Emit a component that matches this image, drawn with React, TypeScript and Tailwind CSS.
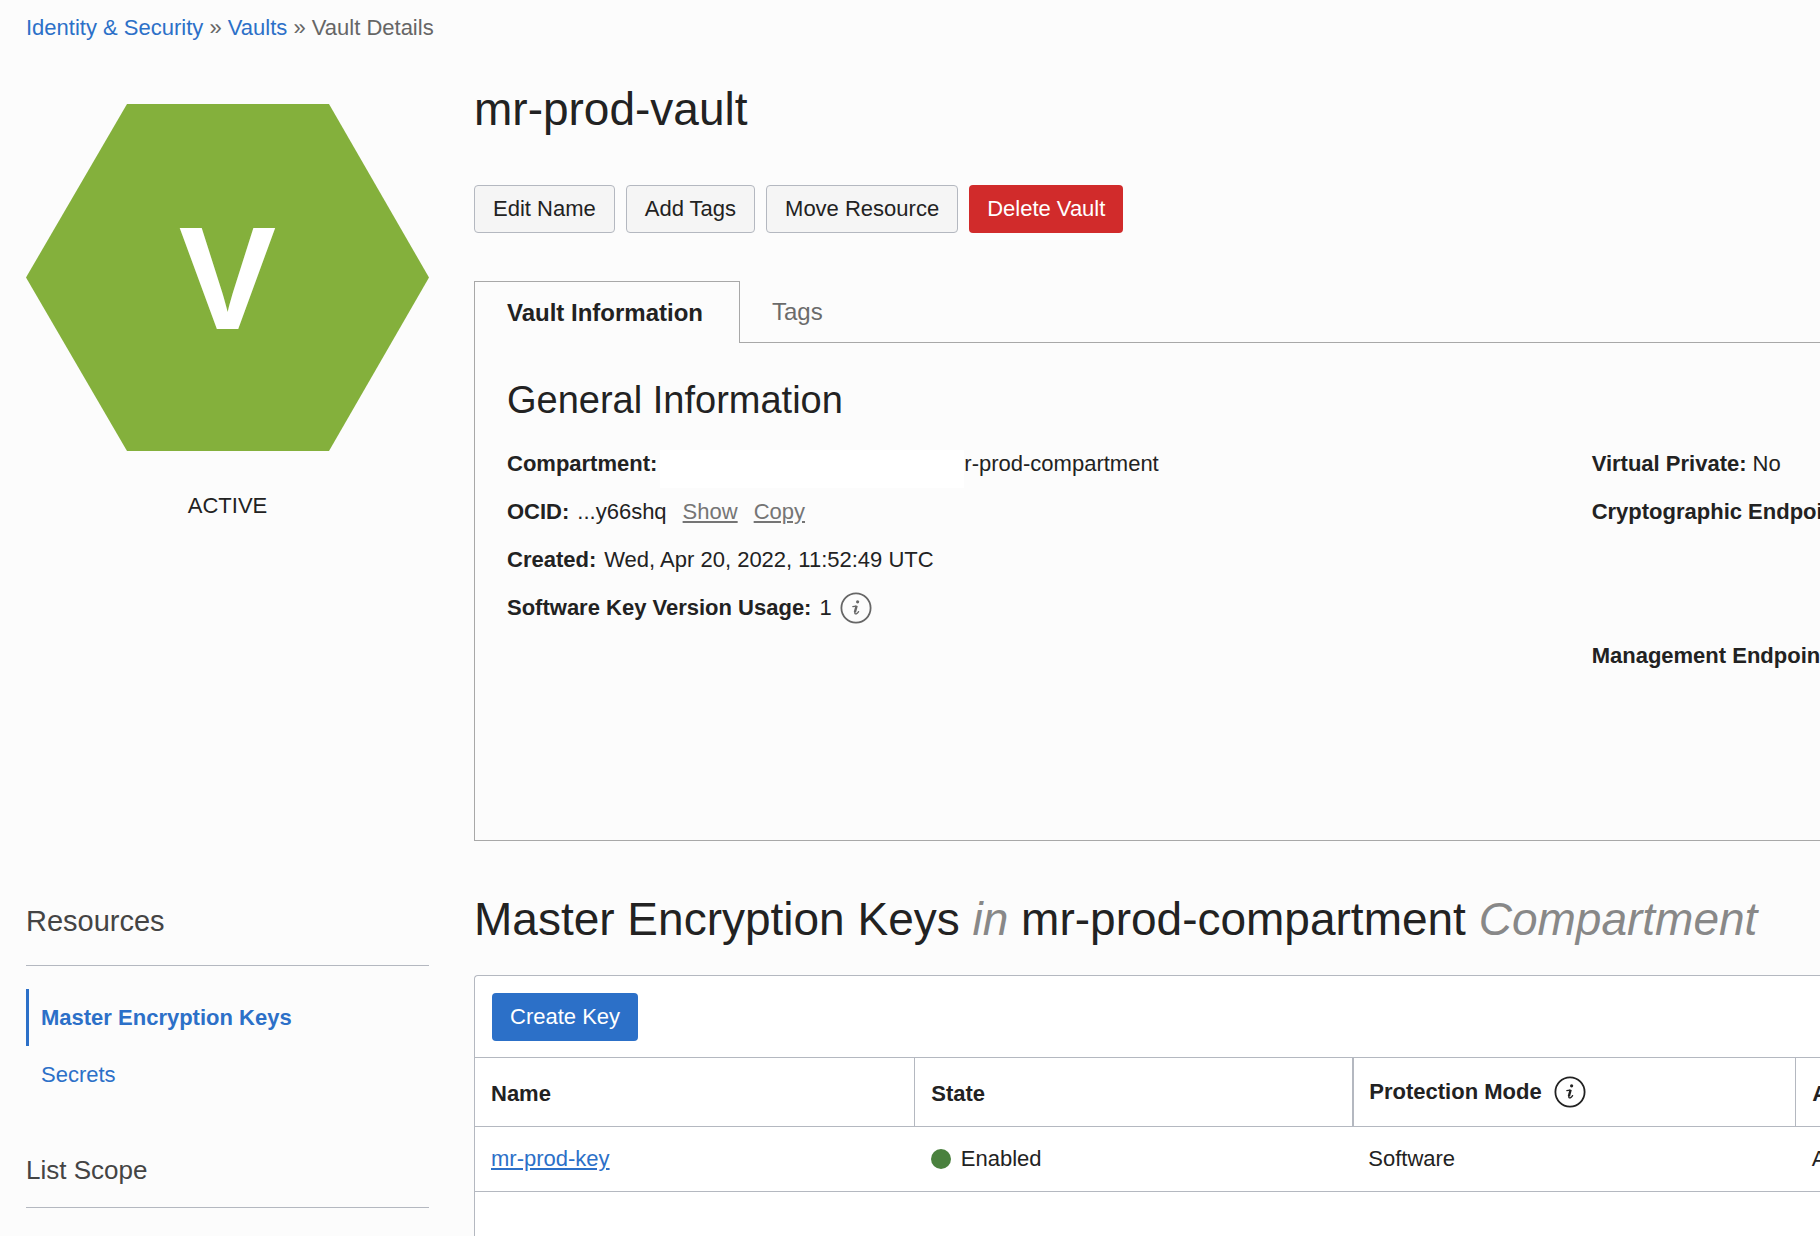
import React from "react";

function InfoIcon({ className }: { className: string }) {
  return (
    <svg viewBox="0 0 32 32" className={className} fill="none" stroke="currentColor" aria-hidden="true">
      <circle cx="16" cy="16" r="14.6" strokeWidth="1.8" />
      <circle cx="17.6" cy="9.8" r="1.6" fill="currentColor" stroke="none" />
      <path d="M12.8 14.7 L16 14.1" strokeWidth="1.2" strokeLinecap="round" />
      <path d="M16.6 13.8 L14.9 20.3" strokeWidth="2.4" />
      <path d="M14.8 20 Q14.5 22.4 16.3 21.8 Q17.6 21.2 18.6 19.6" strokeWidth="1.3" strokeLinecap="round" />
    </svg>
  );
}

function InfoButton({ label, className }: { label: string; className: string }) {
  return (
    <button type="button" aria-label={label} className="shrink-0">
      <InfoIcon className={className} />
    </button>
  );
}

function Field({ label, children }: { label: string; children?: React.ReactNode }) {
  return (
    <div className="flex h-12 items-center whitespace-nowrap">
      <dt className="font-bold">{label}</dt>
      <dd className="flex items-center self-stretch">{children}</dd>
    </div>
  );
}

const actions = ["Edit Name", "Add Tags", "Move Resource"];

export default function App() {
  return (
    <div className="flex min-h-screen flex-col overflow-x-hidden bg-[#fcfcfc] pl-[26px] font-['Liberation_Sans',Arial,sans-serif] text-[22px] leading-7 text-[#222]">
      <nav aria-label="Breadcrumb" className="pt-3.5 text-[#666]">
        <a href="#identity" className="text-[#2c70c8]">Identity &amp; Security</a>
        {" » "}
        <a href="#vaults" className="text-[#2c70c8]">Vaults</a>
        {" » "}
        <span>Vault Details</span>
      </nav>

      <section className="flex gap-[45px] pt-[39px]">
        <div className="flex w-[403px] shrink-0 flex-col items-center pt-[23px]">
          <svg viewBox="0 0 403 347" className="w-full" role="img" aria-label="Vault">
            <polygon points="101,0 303,0 403,173.5 303,347 101,347 0,173.5" fill="#84b03c" />
            <text x="201.5" y="225" textAnchor="middle" fontSize="146" fontWeight="700" fill="#fff">V</text>
          </svg>
          <p className="pt-[41px]">ACTIVE</p>
        </div>

        <div className="min-w-0 flex-1">
          <h1 className="text-[46px] leading-[56px]">mr-prod-vault</h1>
          <div className="flex gap-[11px] pt-12">
            {actions.map((a) => (
              <button key={a} type="button" className="h-12 rounded border border-[#b4b8c0] bg-[#f5f5f5] px-[18px]">
                {a}
              </button>
            ))}
            <button type="button" className="h-12 rounded bg-[#d12b2b] px-[18px] text-white">Delete Vault</button>
          </div>

          <div role="tablist" className="flex pt-12">
            <button type="button" role="tab" aria-selected="true" className="h-[62px] border border-b-0 border-[#a8a8a8] pr-9 pl-8 text-2xl font-bold">
              Vault Information
            </button>
            <div className="flex flex-1 border-b border-[#a8a8a8]">
              <button type="button" role="tab" aria-selected="false" className="px-8 text-2xl text-[#6b6b6b]">
                Tags
              </button>
            </div>
          </div>

          <div role="tabpanel" className="min-h-[498px] border-b border-l border-[#a8a8a8] pt-[33px] pl-8">
            <h2 className="text-[38px] leading-[48px]">General Information</h2>
            <div className="grid grid-cols-[minmax(0,19fr)_minmax(0,4fr)] pt-4">
              <dl>
                <Field label="Compartment:">
                  <span className="ml-[3px] h-[38px] w-[304px] self-end bg-white" />
                  r-prod-compartment
                </Field>
                <Field label="OCID:">
                  <span className="pl-2">...y66shq</span>
                  <button type="button" className="pl-4 text-[#757575] underline underline-offset-2">Show</button>
                  <button type="button" className="pl-4 text-[#757575] underline underline-offset-2">Copy</button>
                </Field>
                <Field label="Created:">
                  <span className="pl-2">Wed, Apr 20, 2022, 11:52:49 UTC</span>
                </Field>
                <Field label="Software Key Version Usage:">
                  <span className="px-2">1</span>
                  <InfoButton label="About software key version usage" className="size-8 text-[#666]" />
                </Field>
              </dl>
              <dl>
                <Field label="Virtual Private:">
                  <span className="pl-1.5">No</span>
                </Field>
                <Field label="Cryptographic Endpoint:" />
                <div className="pt-24">
                  <Field label="Management Endpoint:" />
                </div>
              </dl>
            </div>
          </div>
        </div>
      </section>

      <section className="flex flex-1 gap-[45px] pt-[50px]">
        <aside className="w-[403px] shrink-0">
          <h2 className="border-b border-[#b4b8c0] pt-3.5 pb-7 text-[29px] leading-8 text-[#444]">Resources</h2>
          <ul className="pt-[23px]">
            <li>
              <a href="#keys" className="flex h-[57px] items-center border-l-[3px] border-[#2c70c8] pl-3 font-bold text-[#2c70c8]">
                Master Encryption Keys
              </a>
            </li>
            <li>
              <a href="#secrets" className="flex h-[57px] items-center pl-[15px] text-[#2c70c8]">Secrets</a>
            </li>
          </ul>
          <h2 className="border-b border-[#b4b8c0] pt-[51px] pb-[21px] text-[26px] leading-8 text-[#444]">List Scope</h2>
        </aside>

        <div className="flex min-w-0 flex-1 flex-col">
          <h2 className="text-[46px] leading-[56px] whitespace-nowrap">
            Master Encryption Keys <em className="text-[#888]">in</em> mr-prod-compartment{" "}
            <em className="text-[#888]">Compartment</em>
          </h2>
          <div className="mt-7 flex-1 rounded-tl border-t border-l border-[#b4b8c0] bg-white">
            <div className="px-[17px] pt-[17px] pb-4">
              <button type="button" className="h-12 rounded bg-[#2c70c8] px-[18px] text-white">Create Key</button>
            </div>
            <table className="w-full table-fixed border-collapse text-left whitespace-nowrap">
              <colgroup>
                <col className="w-[32.7%]" />
                <col className="w-[32.6%]" />
                <col className="w-[32.9%]" />
                <col />
              </colgroup>
              <thead>
                <tr className="h-[69px] border-y border-[#b4b8c0]">
                  <th scope="col" className="border-r border-[#b4b8c0] pt-1 pl-4">Name</th>
                  <th scope="col" className="border-r-2 border-[#b4b8c0] pt-1 pl-4">State</th>
                  <th scope="col" className="border-r border-[#b4b8c0] pl-[15px]">
                    <span className="flex items-center gap-3">
                      Protection Mode
                      <InfoButton label="About protection mode" className="size-8" />
                    </span>
                  </th>
                  <th scope="col" className="overflow-hidden pt-1 pl-4">Algorithm</th>
                </tr>
              </thead>
              <tbody>
                <tr className="h-[65px] border-b border-[#b4b8c0]">
                  <td className="pl-4">
                    <a href="#mr-prod-key" className="text-[#2c70c8] underline underline-offset-2">mr-prod-key</a>
                  </td>
                  <td className="pl-4">
                    <span className="flex items-center gap-2.5">
                      <span className="size-5 rounded-full bg-[#4a813e]" />
                      Enabled
                    </span>
                  </td>
                  <td className="pl-[15px]">Software</td>
                  <td className="overflow-hidden pl-4">AES</td>
                </tr>
              </tbody>
            </table>
          </div>
        </div>
      </section>
    </div>
  );
}
